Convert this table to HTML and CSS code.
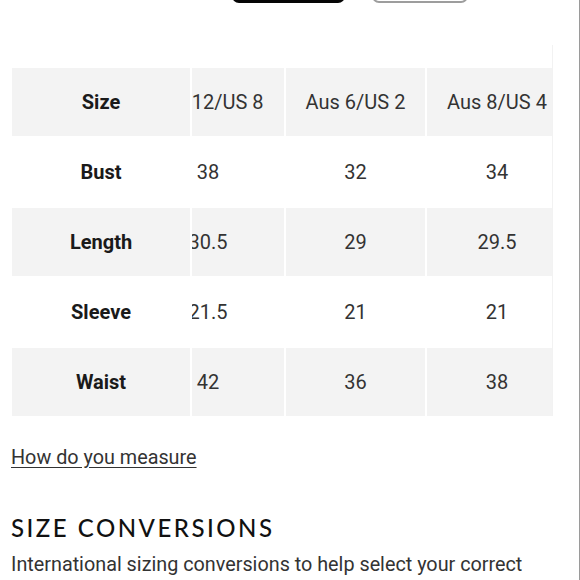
FILE: index.html
```html
<!DOCTYPE html>
<html lang="en">
<head>
<meta charset="utf-8">
<title>Size Guide</title>
<link rel="stylesheet" href="styles.css">
</head>
<body>
<div class="page">
  <div class="top-actions">
    <div class="btn btn-dark"></div>
    <div class="btn btn-outline"></div>
  </div>

  <div class="table-wrap">
    <div class="size-table">
      <div class="row shade">
        <div class="cell label">Size</div>
        <div class="cell clip-left"><span class="inner w2">Aus 12/US 8</span></div>
        <div class="cell"><span>Aus 6/US 2</span></div>
        <div class="cell clip-right"><span class="inner w4">Aus 8/US 4</span></div>
      </div>
      <div class="row">
        <div class="cell label">Bust</div>
        <div class="cell clip-left"><span class="inner w2">38</span></div>
        <div class="cell"><span>32</span></div>
        <div class="cell clip-right"><span class="inner w4">34</span></div>
      </div>
      <div class="row shade">
        <div class="cell label">Length</div>
        <div class="cell clip-left"><span class="inner w2">30.5</span></div>
        <div class="cell"><span>29</span></div>
        <div class="cell clip-right"><span class="inner w4">29.5</span></div>
      </div>
      <div class="row">
        <div class="cell label">Sleeve</div>
        <div class="cell clip-left"><span class="inner w2">21.5</span></div>
        <div class="cell"><span>21</span></div>
        <div class="cell clip-right"><span class="inner w4">21</span></div>
      </div>
      <div class="row shade">
        <div class="cell label">Waist</div>
        <div class="cell clip-left"><span class="inner w2">42</span></div>
        <div class="cell"><span>36</span></div>
        <div class="cell clip-right"><span class="inner w4">38</span></div>
      </div>
    </div>
  </div>

  <a class="measure-link" href="#">How do you measure</a>

  <h2 class="section-title">SIZE CONVERSIONS</h2>
  <p class="section-text">International sizing conversions to help select your correct</p>
</div>
</body>
</html>
```

FILE: styles.css
```css
html, body {
  margin: 0;
  padding: 0;
  background: #ffffff;
}

body {
  font-family: Roboto, "Liberation Sans", Arial, sans-serif;
  color: #333333;
}

.page {
  width: 579px;
  height: 580px;
  border-right: 1px solid #9a9a9a;
  overflow: hidden;
}

.top-actions {
  display: flex;
  align-items: flex-end;
  height: 3px;
  padding-left: 232px;
  gap: 27px;
}

.btn {
  flex: none;
  height: 40px;
  border-radius: 7px;
  box-sizing: border-box;
}

.btn-dark {
  width: 113px;
  background: #050505;
}

.btn-outline {
  width: 96px;
  height: 39px;
  border: 2px solid #9d9d9d;
  background: #ffffff;
}

.table-wrap {
  margin-top: 42px;
  margin-left: 12px;
  width: 540px;
  padding-top: 23px;
  border-right: 1px solid #f2f2f2;
  overflow: hidden;
}

.size-table {
  display: flex;
  flex-direction: column;
  gap: 2px;
}

.row {
  display: grid;
  grid-template-columns: 178px 92px 139px 125px;
  column-gap: 2px;
  height: 68px;
}

.row .cell {
  display: flex;
  align-items: center;
  justify-content: center;
  font-size: 20px;
  color: #333333;
  white-space: nowrap;
  overflow: hidden;
}

.row.shade .cell {
  background: #f3f3f3;
}

.row .cell.label {
  font-weight: 700;
  color: #1a1a1a;
}

.row .cell.clip-left,
.row .cell.clip-right {
  justify-content: flex-start;
}

.inner {
  flex: none;
  text-align: center;
}

.inner.w2 {
  width: 148px;
  margin-left: -58px;
}

.inner.w4 {
  width: 140px;
}

.measure-link {
  display: inline-block;
  margin-top: 30px;
  margin-left: 11px;
  font-size: 19.8px;
  line-height: 24px;
  color: #333333;
  text-decoration: underline;
  text-underline-offset: 3px;
}

.section-title {
  margin: 43px 0 0 11px;
  font-family: Lato, "Open Sans", sans-serif;
  font-weight: 500;
  font-size: 24px;
  line-height: 30px;
  letter-spacing: 2.5px;
  color: #111111;
}

.section-text {
  margin: 9px 0 0 11px;
  font-size: 19.8px;
  line-height: 26px;
  color: #333333;
  white-space: nowrap;
}
```
